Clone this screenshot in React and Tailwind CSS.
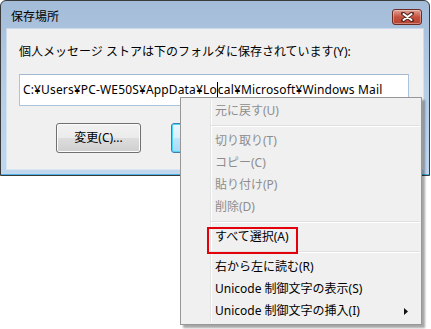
import React from "react";

function MenuItem({ children, disabled, arrow }) {
  return (
    <div
      className={`relative flex h-[22px] items-center pl-[33px] pr-2 text-[12px] leading-[16px] ${
        disabled ? "text-[#8d8d8d]" : "text-black"
      }`}
    >
      <span>{children}</span>
      {arrow && (
        <svg
          className="absolute right-[13px] top-[8px]"
          width="4"
          height="7"
          viewBox="0 0 4 7"
        >
          <path d="M0 0 L4 3.5 L0 7 Z" fill="#111" />
        </svg>
      )}
    </div>
  );
}

function Sep() {
  return (
    <div className="flex h-[8px] items-center pl-[29px] pr-[1px]">
      <div className="h-[2px] w-full border-t border-[#e0e0e0] border-b border-b-white" />
    </div>
  );
}

export default function App() {
  return (
    <div className="relative h-[329px] w-[431px] overflow-hidden bg-white font-['Noto_Sans','Noto_Sans_CJK_JP',sans-serif]">
      {/* dialog window */}
      <div className="flex h-[176px] w-[430px] flex-col rounded-t-[6px] border border-[#3a3a3a] bg-gradient-to-b from-[#a3bcd8] via-[#b6cde6] to-[#c1d7ee] px-[6px] pb-[6px] shadow-[inset_0_-1px_0_#4cb3e6]">
        <div className="flex h-[28px] shrink-0 items-center justify-between pl-[4px] pr-[1px] pt-[4px]">
          <span className="text-[12px] leading-[16px] text-black">保存場所</span>
          <div className="flex h-[16px] w-[30px] items-center justify-center rounded-[3px] border border-[#6b2a22] bg-gradient-to-b from-[#e0a196] via-[#c6503f] to-[#b8432f] shadow-[inset_0_0_0_1px_rgba(255,255,255,0.35)]">
            <svg width="13" height="10" viewBox="0 0 13 10">
              <path d="M2 1.5 L11 8.5 M11 1.5 L2 8.5" stroke="#5a2a24" strokeWidth="4" strokeLinecap="round" />
              <path d="M2.5 2 L10.5 8 M10.5 2 L2.5 8" stroke="#ffffff" strokeWidth="2" strokeLinecap="round" />
            </svg>
          </div>
        </div>
        <div className="flex flex-1 flex-col bg-[#f0f0f0] pl-[12px] pt-[15px] shadow-[0_0_0_1px_rgba(255,255,255,0.4)]">
          <div className="text-[12px] leading-[16px] text-black">
            個人メッセージ ストアは下のフォルダに保存されています(Y):
          </div>
          <div className="mt-[14px] flex h-[32px] w-[390px] items-center border border-[#abc3dc] border-t-[#a2b8d0] bg-white pl-[3px] text-[12px] leading-[16px] tracking-[0.15px] text-black">
            <span>C:¥Users¥PC-WE50S¥AppData¥Lo</span>
            <span className="inline-block h-[17px] w-px bg-black" />
            <span>cal¥Microsoft¥Windows Mail</span>
          </div>
          <div className="mt-[17px] flex gap-[30px] pl-[37px]">
            <div className="flex h-[30px] w-[85px] items-center justify-center rounded-[3px] border border-[#707070] bg-[linear-gradient(#f2f2f2_0%,#ebebeb_50%,#dddddd_51%,#cfcfcf_100%)] text-[12px] leading-[16px] text-black shadow-[inset_0_0_0_1px_#fcfcfc]">
              変更(C)...
            </div>
            <div className="h-[30px] w-[85px] rounded-[3px] border border-[#3c7fb1] bg-[linear-gradient(#eaf6fd_0%,#d9f0fc_50%,#bee6fd_51%,#a7d9f5_100%)] shadow-[inset_0_0_0_1px_#48d8fb]" />
          </div>
        </div>
      </div>

      {/* context menu */}
      <div className="absolute left-[180px] top-[97px] w-[242px] border border-[#979797] bg-[#f0f0f0] py-[2px] pl-[1px] shadow-[3px_3px_2px_rgba(0,0,0,0.35)]">
        <div className="pointer-events-none absolute bottom-[2px] left-[29px] top-[2px] w-[2px] border-l border-[#e2e3e3] border-r border-r-white" />
        <div className="relative">
          <MenuItem disabled>元に戻す(U)</MenuItem>
          <Sep />
          <MenuItem disabled>切り取り(T)</MenuItem>
          <MenuItem disabled>コピー(C)</MenuItem>
          <MenuItem disabled>貼り付け(P)</MenuItem>
          <MenuItem disabled>削除(D)</MenuItem>
          <Sep />
          <MenuItem>すべて選択(A)</MenuItem>
          <Sep />
          <MenuItem>右から左に読む(R)</MenuItem>
          <MenuItem>Unicode 制御文字の表示(S)</MenuItem>
          <MenuItem arrow>Unicode 制御文字の挿入(I)</MenuItem>
        </div>
        <div className="pointer-events-none absolute left-[26px] top-[129px] h-[27px] w-[91px] border-2 border-[#e3000b]" />
      </div>
    </div>
  );
}
